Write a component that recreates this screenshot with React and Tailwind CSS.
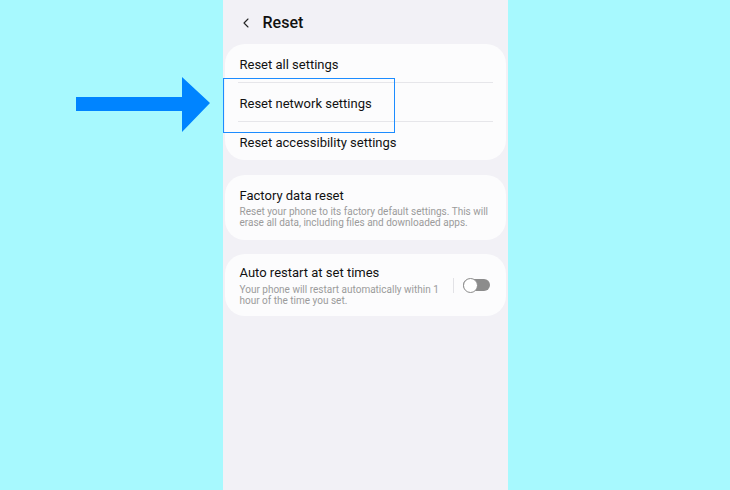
import { ChevronLeft } from 'lucide-react'

function Row({ label, last }) {
  return (
    <div className={`mx-[13px] flex items-center px-[2px] pt-[3px] ${last ? 'h-[38px]' : 'h-[39px] border-b border-[#e6e6ea]'}`}>
      <span className="text-[13px] text-[#111]">{label}</span>
    </div>
  )
}

function Toggle() {
  return (
    <div className="relative w-[27px] h-[15px] flex items-center">
      <div className="w-[27px] h-[12px] rounded-full bg-[#8c8c8c]" />
      <div className="absolute left-0 top-0 w-[15px] h-[15px] rounded-full bg-white border-[1.5px] border-[#8c8c8c]" />
    </div>
  )
}

export default function App() {
  return (
    <div className="relative w-[730px] h-[490px] bg-[#a7f9fe] overflow-hidden" style={{ fontFamily: 'Roboto, "Noto Sans", sans-serif' }}>
      <div className="mx-auto w-[285px] h-full bg-[#f2f1f6] flex flex-col">
        <div className="h-[44px] flex items-center pl-[15px] pt-[2px]">
          <ChevronLeft size={16} strokeWidth={1.6} className="text-[#222]" />
          <span className="ml-[9px] text-[16px] font-medium text-[#111]">Reset</span>
        </div>

        <div className="mx-[2px] bg-[#fcfcfd] rounded-[20px]">
          <Row label="Reset all settings" />
          <Row label="Reset network settings" />
          <Row label="Reset accessibility settings" last />
        </div>

        <div className="mx-[2px] mt-[15px] bg-[#fcfcfd] rounded-[20px] pl-[15px] pr-[12px] pt-[12px] pb-[12px]">
          <div className="text-[13px] text-[#111] leading-[17px]">Factory data reset</div>
          <div className="mt-[2px] text-[10px] leading-[11px] text-[#9b9b9b]">
            Reset your phone to its factory default settings. This will erase all data, including files and downloaded apps.
          </div>
        </div>

        <div className="mx-[2px] mt-[14px] bg-[#fcfcfd] rounded-[20px] pl-[15px] pr-[16px] pt-[10px] pb-[10px] flex items-center">
          <div className="flex-1 pr-[12px]">
            <div className="text-[13px] text-[#111] leading-[17px]">Auto restart at set times</div>
            <div className="mt-[3px] text-[10px] leading-[11px] text-[#9b9b9b]">
              Your phone will restart automatically within 1 hour of the time you set.
            </div>
          </div>
          <div className="w-px h-[15px] bg-[#e2e2e6] mr-[9px]" />
          <Toggle />
        </div>
      </div>

      <div className="absolute left-[223px] top-[78px] w-[172px] h-[55px] border border-[#1c8cff]" />

      <svg className="absolute left-[76px] top-[77px]" width="136" height="56" viewBox="0 0 136 56">
        <polygon points="0,20 106,20 106,0 134,26 106,55 106,34 0,34" fill="#0084ff" />
      </svg>
    </div>
  )
}
